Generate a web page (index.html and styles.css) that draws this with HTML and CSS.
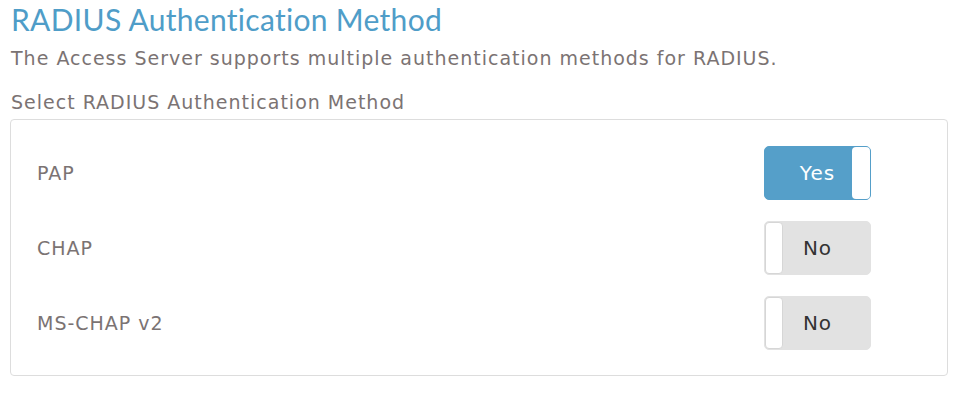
FILE: index.html
```html
<!DOCTYPE html>
<html>
<head>
<meta charset="utf-8">
<link rel="stylesheet" href="styles.css">
</head>
<body>
<h1 class="title">RADIUS Authentication Method</h1>
<p class="desc">The Access Server supports multiple authentication methods for RADIUS.</p>
<div class="group-label">Select RADIUS Authentication Method</div>
<div class="card">
  <div class="row">
    <span class="label">PAP</span>
    <div class="toggle on"><span class="text">Yes</span><span class="knob"></span></div>
  </div>
  <div class="row">
    <span class="label">CHAP</span>
    <div class="toggle off"><span class="knob"></span><span class="text">No</span></div>
  </div>
  <div class="row">
    <span class="label">MS-CHAP v2</span>
    <div class="toggle off"><span class="knob"></span><span class="text">No</span></div>
  </div>
</div>
</body>
</html>
```
FILE: styles.css
```css
* { box-sizing: border-box; }
body {
  margin: 0;
  padding: 0 18px 0 10px;
  background: #fff;
  font-family: "DejaVu Sans", "Open Sans", sans-serif;
  color: #7b7373;
}
.title {
  margin: 0;
  padding: 2px 0 0 1px;
  font-family: "Lato", "Open Sans", sans-serif;
  font-weight: 400;
  font-size: 30px;
  letter-spacing: 0.3px;
  line-height: 34px;
  color: #4f9dc8;
}
.desc {
  margin: 10px 0 0 1px;
  font-size: 19px;
  letter-spacing: 1px;
  line-height: 24px;
  color: #7b7373;
}
.group-label {
  margin: 20px 0 0 1px;
  font-size: 19px;
  letter-spacing: 1px;
  line-height: 24px;
  color: #7b7373;
}
.card {
  margin-top: 5px;
  border: 1px solid #ddd;
  border-radius: 4px;
  padding: 26px 76px 25px 26px;
  display: flex;
  flex-direction: column;
  gap: 21px;
}
.row {
  display: flex;
  align-items: center;
  justify-content: space-between;
  height: 54px;
}
.label {
  font-size: 19px;
  letter-spacing: 1px;
  color: #7b7373;
}
.toggle {
  position: relative;
  width: 107px;
  height: 54px;
  border-radius: 5px;
  display: flex;
  align-items: center;
  justify-content: center;
  border: 1px solid #e2e2e2;
}
.toggle .text {
  font-size: 20px;
  letter-spacing: 1px;
}
.toggle .knob {
  position: absolute;
  top: 0;
  bottom: 0;
  width: 18px;
  background: #fff;
  border-radius: 4px;
}
.toggle.on {
  background: #559fc9;
  border-color: #559fc9;
}
.toggle.on .knob { right: 0; }
.toggle.on .text { color: #fff; }
.toggle.off {
  background: #e2e2e2;
}
.toggle.off .knob { left: 0; border: 1px solid #d6d6d6; }
.toggle.off .text { color: #333; }
```
